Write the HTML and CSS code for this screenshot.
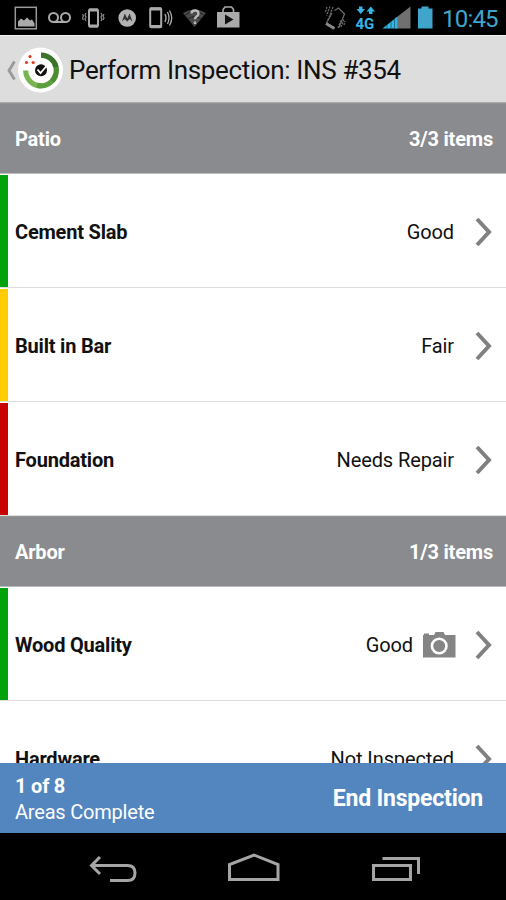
FILE: index.html
```html
<!DOCTYPE html>
<html lang="en">
<head>
<meta charset="utf-8">
<title>Perform Inspection</title>
<link rel="stylesheet" href="styles.css">
</head>
<body>
<div class="screen">
  <div class="status">
    <svg class="status-icons" width="250" height="35" viewBox="0 0 250 35" fill="none" stroke="#aaa" stroke-width="2">
      <rect x="15.300" y="7.300" width="21" height="21.500" stroke-width="1.500" stroke="#999"/>
      <path d="M18 26.500v-5l3-3 3 2 3-3 3 3 2-1 2.500 4v3z" fill="#aaa" stroke="none"/>
      <circle cx="53.500" cy="17.500" r="4.500"/><circle cx="65.500" cy="17.500" r="4.500"/><path d="M53 22h13"/>
      <rect x="89" y="9.500" width="9" height="17" rx="1"/><path d="M89 10h9M89 26h9" stroke-width="3"/>
      <path d="M86 13l-1 2 1 2-1 2 1 2M82.500 14l1 2-1 2 1 2M101 13l1 2-1 2 1 2-1 2M104 14l-1 2 1 2-1 2" stroke-width="1.200" stroke="#888"/>
      <circle cx="127.200" cy="18" r="8.800" fill="#b2b2b2" stroke="none"/>
      <path d="M122 21.500l2.800-8 2.400 5 2.400-5 2.800 8-2.700-2.500-2.500 2.500-2.500-2.500z" fill="#333" stroke="none"/>
      <rect x="150.200" y="8.200" width="11" height="19" rx="1"/><path d="M150 9h11M150 26.500h11" stroke-width="3"/>
      <path d="M165 14q2 4 0 8M167.500 12q3 6 0 12M169.500 10.500q4.500 7.500 0 15" stroke-width="1.300"/>
      <path d="M183 13q12-7 23 0L194.500 27z" fill="#4a4a4a" stroke="none"/>
      <path d="M185 15q10-7 19 0M188 19q7-5 13 0" stroke="#222" stroke-width="1"/>
      <path d="M191.500 13.500q0-3 3.500-3t3.500 3q0 2-2 3-1.500.8-1.500 2.700M195 21.500v2.500" stroke="#bbb" stroke-width="2.300"/>
      <path d="M217 12h22.500v15.500H217z" fill="#aaa" stroke="none"/>
      <path d="M223 13V9.500l2-2.500h6.500l2 2.500V13" stroke-width="1.600"/>
      <path d="M225 14.500l8.500 5-8.500 5z" fill="#111" stroke="none"/>
    </svg>
    <svg class="status-icons" width="116" height="35" viewBox="320 0 116 35" fill="none">
      <g stroke="#6a6a6a" stroke-width="1.300">
        <path d="M334.500 10.500l4-2.500 6 6-5.500 13.500M332 13l-5.500 10" />
        <path d="M326 23.500l8.500 5" stroke="#8a8a8a" stroke-width="3"/>
        <path d="M327 7l-2 6M330 6.500l-3.500 9M333 7l-5 13M338 28l3-8M341 27l3-8M344 25l1-4" stroke-dasharray="2 1"/>
      </g>
      <g fill="#33b5e5">
        <path d="M359 6.500h3.500V9h2.500l-4.300 5-4.200-5h2.500zM369 14v-2.500h-2.500l4.300-5 4.200 5h-2.500V14z"/>
        <text class="network" x="355.500" y="28.500">4G</text>
        <path d="M382.500 28.500L396 17.700v10.800z"/>
        <path d="M396 17.700L410.500 6.500v22H396z" fill="#707070"/>
        <path d="M396.500 28.500v-11" stroke="#33b5e5" stroke-width="1.500"/>
        <path d="M387 25v4M391 21v8M394.500 18v11" stroke="#174c60" stroke-width=".7"/>
        <path d="M418 8.500h3.500V6.500h7v2h4v20h-14.500z" fill="#40a5cc"/>
      </g>
    </svg>
    <span class="clock">10:45</span>
  </div>
  <header class="bar">
    <svg width="64" height="64" viewBox="0 36 64 64" fill="none">
      <path d="M14.500 60.500L9 69.500l5.500 9" stroke="#999" stroke-width="2.800"/>
      <circle cx="40.500" cy="69" r="22.500" fill="#fff"/>
      <path d="M25.700 69.500a15.300 15.300 0 0 0 15.300 15.300" stroke="#79b653" stroke-width="5.200"/>
      <path d="M37 84.300a15.300 15.300 0 0 0 18.500-10" stroke="#5d9f3e" stroke-width="5.200"/>
      <path d="M52 80a15.300 15.300 0 0 0 2.500-18" stroke="#4c8c33" stroke-width="5.200"/>
      <path d="M56 66a15.300 15.300 0 0 0-15-11.800" stroke="#3a7329" stroke-width="5.200"/>
      <circle cx="41" cy="69.300" r="6" fill="#111"/>
      <path d="M37.500 68.500l3 3.500 6-7" stroke="#fff" stroke-width="1.800"/>
      <g fill="#dc3a24"><circle cx="30" cy="55.500" r="1.600"/><circle cx="26.500" cy="61.500" r="1.600"/><circle cx="33.200" cy="61.500" r="1.600"/></g>
    </svg>
    <h1 class="title">Perform Inspection: INS #354</h1>
  </header>
  <main class="list">
    <div class="section"><span>Patio</span><span class="count">3/3 items</span></div>
    <div class="row good"><b class="name">Cement Slab</b><span class="state">Good</span><svg class="chevron" width="20" height="32" viewBox="0 0 20 32"><path d="M3 3l12 13L3 29"/></svg></div>
    <div class="row fair"><b class="name">Built in Bar</b><span class="state">Fair</span><svg class="chevron" width="20" height="32" viewBox="0 0 20 32"><path d="M3 3l12 13L3 29"/></svg></div>
    <div class="row repair"><b class="name">Foundation</b><span class="state">Needs Repair</span><svg class="chevron" width="20" height="32" viewBox="0 0 20 32"><path d="M3 3l12 13L3 29"/></svg></div>
    <div class="section"><span>Arbor</span><span class="count">1/3 items</span></div>
    <div class="row good"><b class="name">Wood Quality</b><span class="state">Good</span>
      <svg class="camera" width="33" height="26" viewBox="0 0 33 26"><path d="M0 3h1V1.500h5V3h5l1.500-3h8L22 3h10.500v22.500H0z" fill="#858585"/><circle cx="16.200" cy="14" r="7.300" fill="#858585" stroke="#fff" stroke-width="2.600"/></svg>
      <svg class="chevron" width="20" height="32" viewBox="0 0 20 32"><path d="M3 3l12 13L3 29"/></svg></div>
    <div class="row"><b class="name">Hardware</b><span class="state">Not Inspected</span><svg class="chevron" width="20" height="32" viewBox="0 0 20 32"><path d="M3 3l12 13L3 29"/></svg></div>
  </main>
  <footer class="summary">
    <div class="progress"><b class="done">1 of 8</b><span class="areas">Areas Complete</span></div>
    <b class="end">End Inspection</b>
  </footer>
  <nav class="nav">
    <svg width="506" height="67" viewBox="0 833 506 67" fill="none" stroke="#a5a5a5" stroke-width="3">
      <path d="M100 857l-8.500 8.500 8.500 8.500M92 865.500h35.500q7.500 0 7.500 7.500t-7.500 7.500H110"/>
      <path d="M229.500 879.500v-15L254 855l24 9.500v15z"/>
      <path d="M373.500 865.500h37v14h-37zM382.500 858.500h36V874"/>
    </svg>
  </nav>
</div>
</body>
</html>
```
FILE: styles.css
```css
* { box-sizing: border-box; }
body { margin: 0; background: #000; font-family: Roboto, sans-serif; }
.screen { width: 506px; height: 900px; display: flex; flex-direction: column; overflow: hidden; }
.status { height: 35px; flex: none; display: flex; align-items: center; background: #000; }
.status-icons { display: block; flex: none; }
.status-icons + .status-icons { margin-left: 70px; }
.network { font: bold 15px Roboto, sans-serif; }
.clock { margin-left: 6px; padding-top: 3px; font-size: 24px; letter-spacing: -0.8px; line-height: 32px; color: #40a5cc; white-space: nowrap; }
.bar { height: 68px; flex: none; display: flex; align-items: center; background: #ddd; border-top: 1px solid #f3f3f3; border-bottom: 1px solid #aaa; }
.title { margin: 2px 0 0 5px; font-size: 26px; font-weight: 400; letter-spacing: -0.36px; line-height: 34px; white-space: nowrap; color: #111; }
.list { height: 660px; flex: none; overflow: hidden; background: #fff; }
.section { height: 71px; display: flex; justify-content: space-between; align-items: center; padding: 1px 13px 0 15px; background: #8a8b8e; border-bottom: 1px solid #bbb; border-top: 1px solid #929395; color: #fff; font-size: 20px; font-weight: 700; letter-spacing: -0.2px; }
.row { position: relative; height: 114px; display: flex; align-items: center; padding: 2px 12px 0 15px; border-bottom: 1px solid #ddd; font-size: 20px; color: #111; }
.row::before { content: ""; position: absolute; left: 0; top: 1px; bottom: 0; width: 7.5px; }
.good::before { background: #00a309; }
.fair::before { background: #fc0; }
.repair::before { background: #c90000; }
.name { flex: 1; letter-spacing: -0.2px; padding-top: 1px; }
.state { letter-spacing: -0.1px; padding-top: 1px; }
.chevron { margin-left: 20px; fill: none; stroke: #808080; stroke-width: 4; }
.camera { margin-left: 10px; }
.camera + .chevron { margin-left: 18px; }
.summary { height: 70px; flex: none; display: flex; justify-content: space-between; align-items: center; padding: 1px 23px 0 15px; background: #5386bf; color: #fff; }
.progress { display: flex; flex-direction: column; font-size: 20px; letter-spacing: -0.2px; line-height: 26px; }
.end { font-size: 23px; letter-spacing: -0.2px; }
.nav { height: 67px; flex: none; background: #000; }
.nav svg { display: block; }
```
